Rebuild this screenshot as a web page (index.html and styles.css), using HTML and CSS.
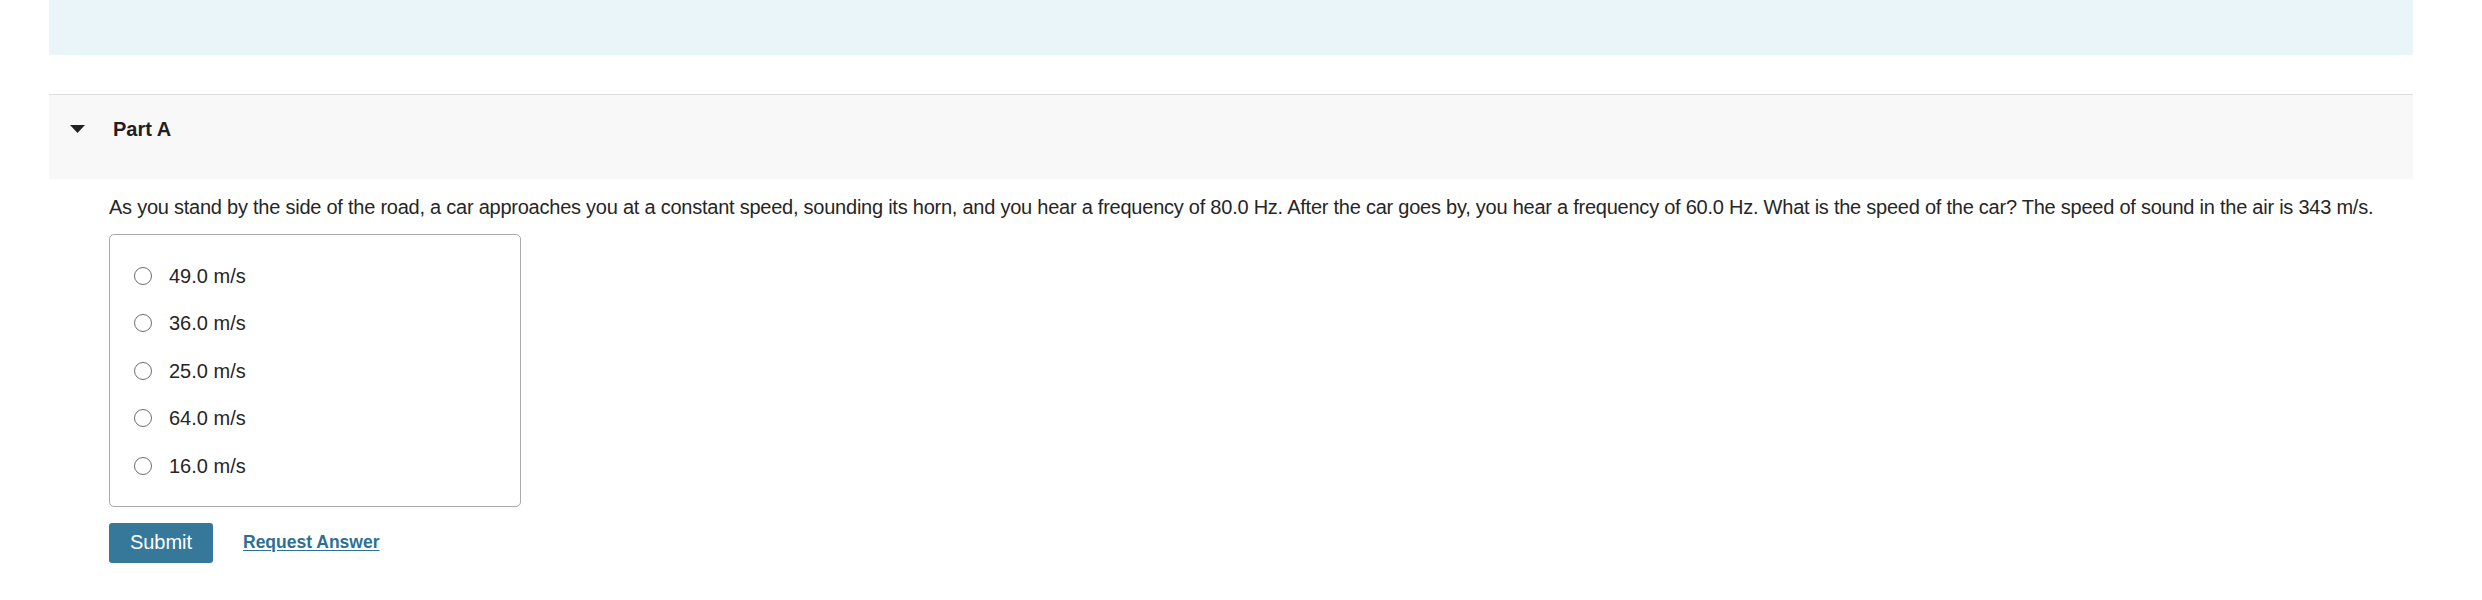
FILE: index.html
```html
<!DOCTYPE html>
<html lang="en">
<head>
<meta charset="utf-8">
<title>Part A</title>
<link rel="stylesheet" href="styles.css">
</head>
<body>
<div class="page">
  <div class="banner"></div>
  <section class="part">
    <header class="part-header">
      <svg class="caret" width="15" height="8" viewBox="0 0 15 8" aria-hidden="true"><path d="M0 0 H15 L7.5 8 Z" fill="#222"/></svg>
      <h2 class="part-title">Part A</h2>
    </header>
    <div class="part-body">
      <p class="question">As you stand by the side of the road, a car approaches you at a constant speed, sounding its horn, and you hear a frequency of 80.0 Hz. After the car goes by, you hear a frequency of 60.0 Hz. What is the speed of the car? The speed of sound in the air is 343 m/s.</p>
      <div class="choices">
        <label class="choice"><input type="radio" name="a" class="radio"><span>49.0 m/s</span></label>
        <label class="choice"><input type="radio" name="a" class="radio"><span>36.0 m/s</span></label>
        <label class="choice"><input type="radio" name="a" class="radio"><span>25.0 m/s</span></label>
        <label class="choice"><input type="radio" name="a" class="radio"><span>64.0 m/s</span></label>
        <label class="choice"><input type="radio" name="a" class="radio"><span>16.0 m/s</span></label>
      </div>
      <div class="actions">
        <button class="submit" type="button">Submit</button>
        <a class="request" href="#">Request Answer</a>
      </div>
    </div>
  </section>
</div>
</body>
</html>
```

FILE: styles.css
```css
html, body {
  margin: 0;
  padding: 0;
  background: #ffffff;
}
body {
  font-family: "Liberation Sans", Arial, Helvetica, sans-serif;
  color: #262626;
}
.page {
  margin-left: 49px;
  width: 2364px;
}
.banner {
  height: 55px;
  background: #e9f5f8;
}
.part {
  margin-top: 39px;
}
.part-header {
  display: flex;
  height: 85px;
  box-sizing: border-box;
  align-items: flex-start;
  padding: 22px 0 0 21px;
  background: #f8f8f8;
  border-top: 1px solid #dddddd;
}
.caret {
  display: block;
  margin-top: 8px;
  margin-right: 28px;
  flex: none;
}
.part-title {
  margin: 0;
  font-size: 20px;
  line-height: 24px;
  font-weight: bold;
  color: #1f1f1f;
}
.part-body {
  padding: 14px 0 0 60px;
}
.question {
  margin: 0;
  font-size: 20px;
  line-height: 28px;
  letter-spacing: -0.24px;
  color: #262626;
}
.choices {
  width: 412px;
  box-sizing: border-box;
  margin-top: 13px;
  padding: 17px 0 16px 24px;
  border: 1px solid #aaaaaa;
  border-radius: 5px;
}
.choice {
  display: flex;
  align-items: center;
  height: 47.5px;
  font-size: 20px;
  line-height: 28px;
  color: #262626;
}
.radio {
  appearance: none;
  -webkit-appearance: none;
  margin: 0 17px 0 0;
  width: 18px;
  height: 18px;
  box-sizing: border-box;
  border: 1.3px solid #6e6e6e;
  border-radius: 50%;
  background: #ffffff;
  flex: none;
}
.actions {
  display: flex;
  align-items: center;
  margin-top: 16px;
}
.submit {
  width: 104px;
  height: 40px;
  border: none;
  border-radius: 3px;
  background: #367899;
  color: #ffffff;
  font-family: "Liberation Sans", Arial, Helvetica, sans-serif;
  font-size: 20px;
  padding: 0;
}
.request {
  margin-left: 30px;
  font-size: 17.5px;
  font-weight: bold;
  color: #2d6f95;
  text-decoration: underline;
  text-underline-offset: 2px;
}
```
